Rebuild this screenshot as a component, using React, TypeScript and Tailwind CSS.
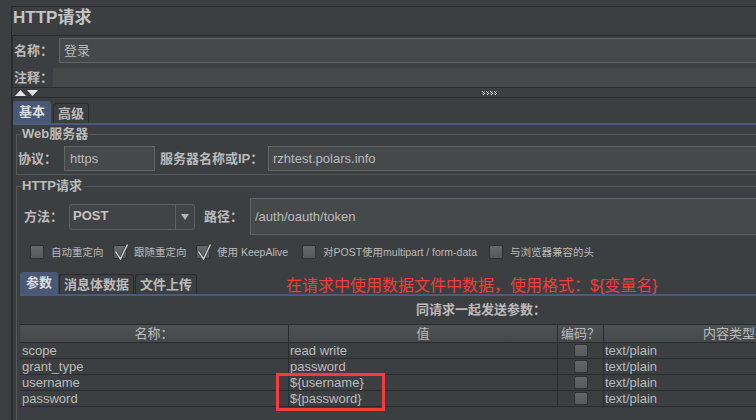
import React from 'react';

function Box({ checked = false }: { checked?: boolean }) {
  return (
    <span className="relative block h-[14px] w-[14px] shrink-0 rounded-[2px] border border-[#2e3032] bg-linear-to-b from-[#66696c] to-[#56595b]">
      {checked && (
        <svg className="absolute -top-[3px] -left-[1px]" width="16" height="18" viewBox="0 0 16 18">
          <path d="M2.5 8.5 L7.5 16 L14.5 1.5" fill="none" stroke="#2b2b2b" strokeWidth="2.6" />
          <path d="M2.5 8.5 L7.5 16 L14.5 1.5" fill="none" stroke="#cfcfcf" strokeWidth="1.5" />
        </svg>
      )}
    </span>
  );
}

function Option({ label, checked, className }: { label: string; checked?: boolean; className: string }) {
  return (
    <div className={`flex items-center ${className}`}>
      <Box checked={checked} />
      <span className="ml-[7px] whitespace-nowrap text-[10.5px] leading-[14px]">{label}</span>
    </div>
  );
}

function Tab({ label, active, className }: { label: string; active?: boolean; className: string }) {
  return active ? (
    <div className={`flex h-[22px] items-center justify-center rounded-t-[3px] bg-[#4a5876] text-[13px] font-bold text-[#dcdcdc] ${className}`}>
      {label}
    </div>
  ) : (
    <div className={`flex h-[20px] items-center justify-center rounded-t-[3px] border border-b-0 border-[#2b2b2b] text-[13px] font-bold ${className}`}>
      {label}
    </div>
  );
}

const params = [
  { name: 'scope', value: 'read write' },
  { name: 'grant_type', value: 'password' },
  { name: 'username', value: '${username}' },
  { name: 'password', value: '${password}' },
];

export default function App() {
  return (
    <div className="relative h-[420px] w-[756px] overflow-hidden bg-[#3c3f41] font-['Liberation_Sans','Noto_Sans_CJK_SC',sans-serif] text-[#bbbbbb]">
      <div className="pl-[11px] pt-[6px]">
        <div className="w-[760px] border-l border-t border-[#2b2b2b]">
          <div className="h-[28px] pl-[1px] text-[17px] font-bold leading-[22px] text-[#c4c4c4]">HTTP请求</div>

          {/* name / comments */}
          <div className="border-y border-l border-[#2b2b2b]">
            <div className="flex pt-[2px]">
              <span className="w-[46px] pl-[1px] text-[13px] font-bold leading-[25px]">名称：</span>
              <div className="h-[25px] flex-1 border border-[#646464] bg-[#45494a] pl-[4px] text-[13px] leading-[23px]">登录</div>
            </div>
            <div className="mt-[5px] flex">
              <span className="w-[40px] pl-[1px] text-[13px] font-bold leading-[19px]">注释：</span>
              <div className="h-[19px] flex-1 bg-[#45494a]" />
            </div>
          </div>

          <div className="flex h-[9px] items-center pl-[3px]">
            <svg width="24" height="6" viewBox="0 0 24 6">
              <path d="M0 6 L5.5 0 L11 6 Z" fill="#e4e4e4" />
              <path d="M12 0 L23 0 L17.5 6 Z" fill="#e4e4e4" />
            </svg>
            <svg className="ml-[443px]" width="16" height="4" viewBox="0 0 16 4">
              {[0, 4, 8, 12].map((x) => (
                <g key={x}>
                  <rect x={x} y="0" width="1" height="1" fill="#eeeeee" />
                  <rect x={x + 1} y="1" width="1" height="1" fill="#eeeeee" />
                  <rect x={x + 2} y="2" width="1" height="1" fill="#eeeeee" />
                  <rect x={x + 1} y="3" width="1" height="1" fill="#eeeeee" />
                  <rect x={x + 2} y="0" width="1" height="1" fill="#888888" />
                  <rect x={x} y="2" width="1" height="1" fill="#888888" />
                </g>
              ))}
            </svg>
          </div>

          {/* tabbed pane */}
          <div className="border-l border-t border-[#2b2b2b]">
            <div className="flex h-[25px] items-end gap-[1px]">
              <Tab label="基本" active className="w-[38px]" />
              <Tab label="高级" className="ml-[1px] w-[36px]" />
            </div>
            <div className="h-[2px] bg-[#4a5a80]" />

            {/* web server */}
            <fieldset className="ml-[3px] mr-[3px] mt-[2px] border border-[#56595b]">
              <legend className="ml-[4px] px-[1px] text-[13px] font-bold leading-[14px]">Web服务器</legend>
              <div className="flex items-center pb-[3px] pt-[5px] pr-[1px]">
                <span className="w-[47px] pl-[1px] text-[13px] font-bold">协议：</span>
                <div className="h-[25px] w-[91px] border border-[#646464] bg-[#45494a] pl-[5px] text-[13px] leading-[23px]">https</div>
                <span className="ml-[5px] w-[108px] text-[13px] font-bold">服务器名称或IP：</span>
                <div className="h-[25px] flex-1 border border-[#646464] bg-[#45494a] pl-[4px] text-[13px] leading-[23px]">rzhtest.polars.info</div>
              </div>
            </fieldset>

            {/* http request */}
            <fieldset className="ml-[3px] mr-[3px] mt-[4px] border border-[#56595b]">
              <legend className="ml-[4px] px-[1px] text-[13px] font-bold leading-[14px]">HTTP请求</legend>
              <div className="flex h-[37px] items-center mt-[5px]">
                <span className="w-[52px] pl-[7px] text-[13px] font-bold">方法：</span>
                <div className="flex h-[26px] w-[126px] rounded-[3px] border border-[#5e6163] bg-[#414446]">
                  <span className="flex-1 pl-[3px] text-[13px] font-bold leading-[22px] text-[#c4c4c4]">POST</span>
                  <span className="flex w-[19px] items-center justify-center border-l border-[#5e6163]">
                    <svg width="8" height="6" viewBox="0 0 8 6">
                      <path d="M0 0 L8 0 L4 6 Z" fill="#b4b4b4" />
                    </svg>
                  </span>
                </div>
                <span className="ml-[9px] w-[46px] text-[13px] font-bold">路径：</span>
                <div className="h-[37px] flex-1 border border-[#646464] bg-[#45494a] pl-[4px] text-[13px] leading-[35px]">/auth/oauth/token</div>
              </div>

              <div className="mt-[10px] flex h-[14px] pl-[13px]">
                <Option label="自动重定向" className="w-[83px]" />
                <Option label="跟随重定向" checked className="w-[83px]" />
                <Option label="使用 KeepAlive" checked className="w-[106px]" />
                <Option label="对POST使用multipart / form-data" className="w-[187px]" />
                <Option label="与浏览器兼容的头" className="w-[120px]" />
              </div>

              <div className="mt-[11px] flex h-[24px] items-end pl-[3px]">
                <Tab label="参数" active className="w-[38px]" />
                <Tab label="消息体数据" className="ml-[1px] w-[75px]" />
                <Tab label="文件上传" className="ml-[1px] w-[62px]" />
              </div>
              <div className="ml-[3px] h-[2px] bg-[#4a5a80]" />

              <div className="ml-[3px]">
                <div className="flex h-[28px] items-center pl-[396px] text-[13px] font-bold">同请求一起发送参数：</div>
                <div className="w-[834px] border-t border-[#2b2b2b] text-[13px]">
                  <div className="grid h-[18px] grid-cols-[269px_269px_46px_250px] border-b border-[#2b2b2b] bg-linear-to-b from-[#4f5254] to-[#45484a] leading-[17px]">
                    <div className="border-r border-[#2b2b2b] text-center">名称：</div>
                    <div className="border-r border-[#2b2b2b] text-center">值</div>
                    <div className="border-r border-[#2b2b2b] text-center">编码？</div>
                    <div className="text-center">内容类型</div>
                  </div>
                  {params.map((p) => (
                    <div key={p.name} className="grid h-[16px] grid-cols-[269px_269px_46px_250px] border-b border-[#2b2b2b] leading-[15px]">
                      <div className="border-r border-[#2b2b2b] pl-[2px]">{p.name}</div>
                      <div className="border-r border-[#2b2b2b] pl-[1px]">{p.value}</div>
                      <div className="flex items-center justify-center border-r border-[#2b2b2b]">
                        <span className="block h-[13px] w-[14px] rounded-[2px] border border-[#2e3032] bg-linear-to-b from-[#646769] to-[#585b5d]" />
                      </div>
                      <div className="pl-[1px]">text/plain</div>
                    </div>
                  ))}
                  <div className="h-[40px]" />
                </div>
              </div>
            </fieldset>
          </div>
        </div>
      </div>

      {/* annotations drawn over the screenshot */}
      <div className="absolute left-[286px] top-[277px] whitespace-nowrap text-[16px] leading-[18px] text-[#f83a3a]">
        在请求中使用数据文件中数据，使用格式：${'{'}变量名{'}'}
      </div>
      <div className="absolute left-[276px] top-[373px] h-[38px] w-[109px] border-[3px] border-[#f83a3a]" />
    </div>
  );
}
